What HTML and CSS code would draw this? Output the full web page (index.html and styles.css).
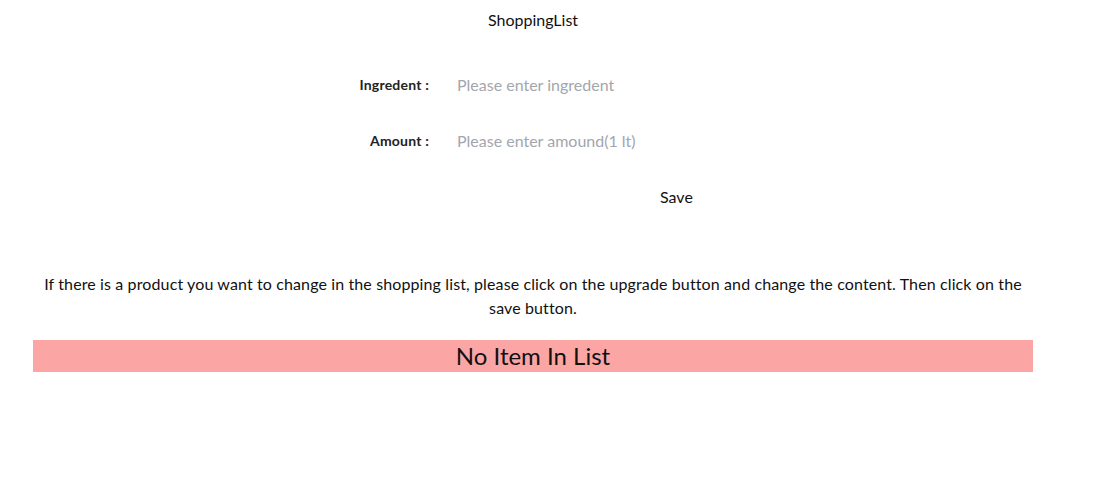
FILE: index.html
```html
<!DOCTYPE html>
<html>
<head>
<meta charset="utf-8">
<title>ShoppingList</title>
<link rel="stylesheet" href="styles.css">
</head>
<body>
<div class="app">
  <header class="title">ShoppingList</header>
  <form class="form">
    <label class="label" for="ing">Ingredent :</label>
    <input class="field" id="ing" type="text" placeholder="Please enter ingredent">
    <label class="label" for="amt">Amount :</label>
    <input class="field" id="amt" type="text" placeholder="Please enter amound(1 lt)">
    <span></span>
    <div class="actions"><button class="save" type="button">Save</button></div>
  </form>
  <p class="info">If there is a product you want to change in the shopping list, please click on the upgrade button and change the content. Then click on the save button.</p>
  <div class="empty">No Item In List</div>
</div>
</body>
</html>
```
FILE: styles.css
```css
html, body {
  margin: 0;
  padding: 0;
  background: #ffffff;
}
body {
  font-family: "Segoe UI", Lato, "Noto Sans", sans-serif;
  color: #111111;
}
.app {
  width: 1000px;
  margin-left: 33px;
  display: flex;
  flex-direction: column;
}
.title {
  margin-top: 8px;
  height: 24px;
  line-height: 24px;
  font-size: 16px;
  text-align: center;
}
.form {
  margin-top: 24px;
  display: grid;
  grid-template-columns: 396px 1fr;
  grid-auto-rows: 56px;
  column-gap: 28px;
  align-items: center;
}
.label {
  text-align: right;
  font-size: 14px;
  font-weight: 700;
  letter-spacing: 0.2px;
  color: #222222;
}
.field {
  border: none;
  outline: none;
  background: transparent;
  padding: 0;
  font-family: inherit;
  font-size: 16px;
  color: #111111;
  width: 300px;
}
.field::placeholder {
  color: #a3a6ad;
}
.actions {
  padding-left: 203px;
}
.save {
  border: none;
  background: transparent;
  padding: 0;
  font-family: inherit;
  font-size: 16px;
  color: #111111;
  cursor: pointer;
}
.info {
  margin: 48px 0 0;
  font-size: 16px;
  line-height: 24px;
  letter-spacing: 0.12px;
  text-align: center;
}
.empty {
  margin-top: 20px;
  height: 32px;
  line-height: 32px;
  background: #fca5a5;
  text-align: center;
  font-size: 24px;
}
```
